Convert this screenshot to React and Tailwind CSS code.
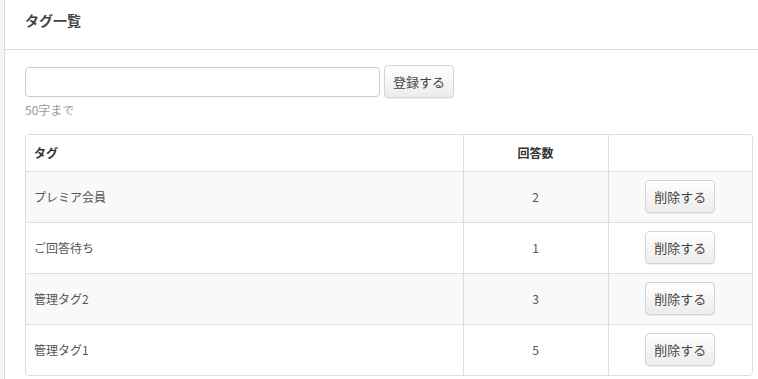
import React from 'react';

const rows = [
  { name: 'プレミア会員', count: 2 },
  { name: 'ご回答待ち', count: 1 },
  { name: '管理タグ2', count: 3 },
  { name: '管理タグ1', count: 5 },
];

const font = { fontFamily: '"Noto Sans CJK JP", "Noto Sans", "Liberation Sans", sans-serif' };

function Btn({ children }) {
  return (
    <button className="h-[33px] w-[70px] rounded-[4px] border border-[#d4d4d4] bg-gradient-to-b from-white to-[#ececec] text-[13px] text-[#444] shadow-[0_1px_1px_rgba(0,0,0,0.06)]">
      {children}
    </button>
  );
}

export default function App() {
  return (
    <div className="flex h-[379px] w-full bg-[#f3f3f3] text-[#555]" style={font}>
      <div className="ml-[4px] flex-1 border-l border-[#dcdcdc] bg-white">
        <div className="flex h-[50px] items-center border-b border-[#dddddd] px-[20px] pb-[8px]">
          <h1 className="text-[14px] font-bold text-[#444]">タグ一覧</h1>
        </div>

        <div className="px-[20px] pt-[15px]">
          <div className="flex items-center">
            <input className="h-[30px] w-[355px] rounded-[4px] border border-[#cccccc] px-2 text-[13px] outline-none" />
            <div className="ml-[4px]">
              <Btn>登録する</Btn>
            </div>
          </div>
          <p className="mt-[3px] text-[12px] leading-[17px] text-[#999]">50字まで</p>

          <div className="mt-[16px] w-[728px] overflow-hidden rounded-[4px] border border-[#dddddd]">
            <table className="w-full border-collapse text-[12px]">
              <thead>
                <tr className="h-[36px] bg-white">
                  <th className="w-[437px] px-[8px] text-left font-bold text-[#333]">タグ</th>
                  <th className="w-[145px] border-l border-[#dddddd] text-center font-bold text-[#333]">回答数</th>
                  <th className="border-l border-[#dddddd]"></th>
                </tr>
              </thead>
              <tbody>
                {rows.map((r, i) => (
                  <tr key={r.name} className={`h-[51px] border-t border-[#dddddd] ${i % 2 === 0 ? 'bg-[#f9f9f9]' : 'bg-white'}`}>
                    <td className="px-[8px]">{r.name}</td>
                    <td className="border-l border-[#dddddd] text-center">{r.count}</td>
                    <td className="border-l border-[#dddddd] text-center">
                      <Btn>削除する</Btn>
                    </td>
                  </tr>
                ))}
              </tbody>
            </table>
          </div>
        </div>
      </div>
    </div>
  );
}
